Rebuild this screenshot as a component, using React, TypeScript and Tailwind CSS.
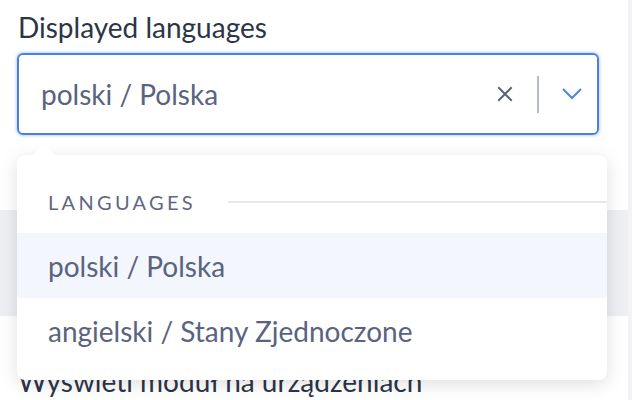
import React from 'react';

function ClearIcon() {
  return (
    <svg width="16" height="16" viewBox="0 0 16 16" fill="none" stroke="#5d6277" strokeWidth="2" strokeLinecap="square">
      <path d="M2 2 L14 14 M14 2 L2 14" />
    </svg>
  );
}

function ChevronIcon() {
  return (
    <svg width="20" height="12" viewBox="0 0 20 12" fill="none" stroke="#4a86e8" strokeWidth="2">
      <path d="M1 1 L10 10 L19 1" />
    </svg>
  );
}

export default function App() {
  return (
    <div className="relative h-[400px] w-[632px] overflow-hidden bg-white font-['Lato',sans-serif]">
      <div className="flex h-full">
        <div className="flex-1 flex flex-col">
          {/* field */}
          <div className="pl-[17px] pt-[8px]">
            <label className="block pl-[1px] text-[28px] leading-[38px] text-[#2c3547]">Displayed languages</label>
            <div className="mt-[7px] flex h-[82px] w-[582px] items-center rounded-[6px] border-2 border-[#4a80e0] pl-[22px] pr-[15px] shadow-[0_0_3px_1px_rgba(74,128,224,0.35)]">
              <span className="flex-1 text-[28px] text-[#5a6380]">polski / Polska</span>
              <ClearIcon />
              <div className="ml-[24px] mr-[23px] h-[37px] w-[2px] bg-[#b5bbcc]" />
              <ChevronIcon />
            </div>
          </div>

          <div className="mt-[75px] h-[106px] bg-[#eeeff3]" />

          <div className="mt-[46px] px-[18px] text-[28px] leading-[38px] text-[#2c3547]">Wyświetl moduł na urządzeniach</div>
        </div>
        <div className="w-[4px] bg-[#f3f3f6]" />
      </div>

      {/* dropdown menu */}
      <div className="absolute left-[17px] top-[155px] h-[225px] w-[590px] rounded-[8px] bg-white shadow-[0_4px_18px_rgba(0,0,0,0.13)]">
        <div className="absolute left-[16px] top-[-12px] h-0 w-0 border-x-[11px] border-b-[12px] border-x-transparent border-b-white" />
        <div className="flex h-[78px] items-start pt-[35px]">
          <span className="pl-[31px] text-[20px] leading-[24px] tracking-[3.3px] text-[#5f6782]">LANGUAGES</span>
          <div className="ml-[32px] mt-[11px] h-[2px] flex-1 bg-[#e6e8ee]" />
        </div>
        <div className="flex h-[65px] items-center bg-[#f3f6fd] px-[31px] text-[28px] text-[#5a6380]">polski / Polska</div>
        <div className="flex h-[65px] items-center px-[31px] text-[28px] text-[#5a6380]">angielski / Stany Zjednoczone</div>
      </div>
    </div>
  );
}
